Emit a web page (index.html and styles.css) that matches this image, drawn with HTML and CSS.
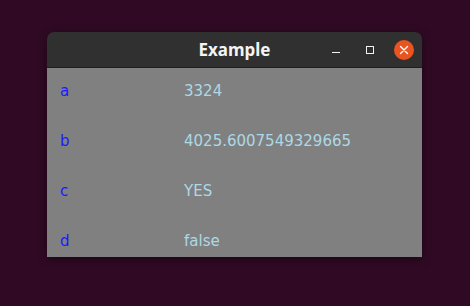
FILE: index.html
```html
<!DOCTYPE html>
<html lang="en">
<head>
  <meta charset="utf-8">
  <title>Example</title>
  <link rel="stylesheet" href="styles.css">
</head>
<body>

<div class="window">
  <div class="titlebar">
    <span class="spacer"></span>
    <span class="title">Example</span>
    <div class="controls">
      <svg class="btn-min" width="8" height="8" viewBox="0 0 8 8">
        <line x1="0" y1="6.5" x2="8" y2="6.5" stroke="#f2f2f2" stroke-width="1"/>
      </svg>
      <svg class="btn-max" width="8" height="8" viewBox="0 0 8 8">
        <rect x="0.5" y="0.5" width="7" height="7" fill="none" stroke="#f2f2f2" stroke-width="1"/>
      </svg>
      <svg class="btn-close" width="20" height="20" viewBox="0 0 20 20">
        <circle cx="10" cy="10" r="10" fill="#e95420"/>
        <path d="M6.5 6.5 L13.5 13.5 M13.5 6.5 L6.5 13.5" stroke="#ffffff" stroke-width="1.4" stroke-linecap="round"/>
      </svg>
    </div>
  </div>

  <div class="content">
    <div class="row"><span class="key">a</span><span class="val">3324</span></div>
    <div class="row"><span class="key">b</span><span class="val">4025.6007549329665</span></div>
    <div class="row"><span class="key">c</span><span class="val">YES</span></div>
    <div class="row"><span class="key">d</span><span class="val">false</span></div>
  </div>
</div>

</body>
</html>
```

FILE: styles.css
```css
html, body {
  margin: 0;
  height: 100%;
}

body {
  background: #300a24;
  font-family: "DejaVu Sans", Verdana, sans-serif;
  overflow: hidden;
}

.window {
  width: 375px;
  margin: 32px 0 0 47px;
  border-radius: 7px 7px 0 0;
  overflow: hidden;
  box-shadow: 0 2px 10px rgba(0, 0, 0, 0.45);
}

.titlebar {
  display: grid;
  grid-template-columns: 1fr auto 1fr;
  align-items: center;
  height: 35px;
  background: #303030;
  border-bottom: 1px solid #1f1f1f;
}

.title {
  font-family: "Noto Sans", "DejaVu Sans", sans-serif;
  font-weight: bold;
  font-size: 17px;
  color: #f4f4f4;
}

.controls {
  display: flex;
  align-items: center;
  justify-content: flex-end;
  padding-right: 8px;
}

.controls svg { display: block; }

.btn-min { margin-right: 26px; }
.btn-max { margin-right: 20px; }

.content {
  height: 189px;
  background: #808080;
  padding: 6px 0 0 13px;
  box-sizing: border-box;
  display: grid;
  grid-template-columns: 124px 1fr;
  grid-auto-rows: 34px;
  row-gap: 16px;
  font-size: 15px;
}

.row {
  display: contents;
}

.key, .val {
  line-height: 34px;
}

.key { color: #1a1aff; }
.val { color: #add8e6; }
```
